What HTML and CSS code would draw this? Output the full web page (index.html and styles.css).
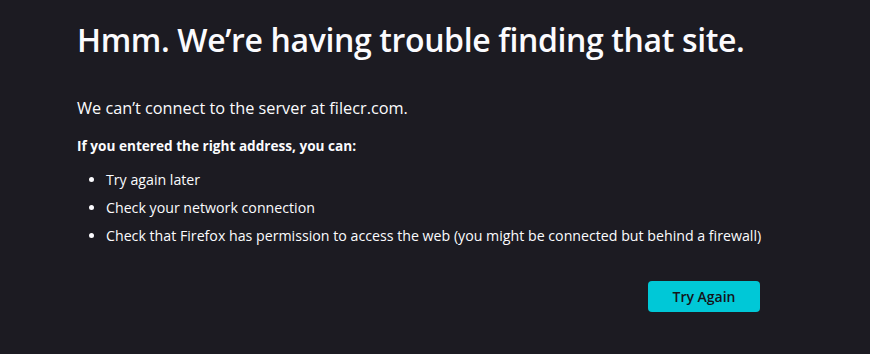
FILE: index.html
```html
<!DOCTYPE html>
<html>
<head>
<meta charset="utf-8">
<link rel="stylesheet" href="styles.css">
</head>
<body>
<main class="container">
  <h1 class="title">Hmm. We’re having trouble finding that site.</h1>
  <p class="intro">We can’t connect to the server at filecr.com.</p>
  <p class="subhead">If you entered the right address, you can:</p>
  <ul class="tips">
    <li>Try again later</li>
    <li>Check your network connection</li>
    <li>Check that Firefox has permission to access the web (you might be connected but behind a firewall)</li>
  </ul>
  <div class="actions">
    <button class="retry">Try Again</button>
  </div>
</main>
</body>
</html>
```

FILE: styles.css
```css
html, body {
  margin: 0;
  padding: 0;
  background: #1c1b22;
  color: #fbfbfe;
  font-family: "Open Sans", "Noto Sans", sans-serif;
}
.container {
  width: 683px;
  padding: 16px 0 0 77px;
}
.title {
  margin: 0;
  font-size: 32px;
  font-weight: 600;
  line-height: 48px;
  letter-spacing: -0.37px;
  white-space: nowrap;
}
.intro {
  margin: 32px 0 0;
  font-size: 16.3px;
  line-height: 24px;
}
.subhead {
  margin: 16px 0 0;
  font-size: 13.6px;
  font-weight: 700;
  line-height: 20px;
}
.tips {
  margin: 14px 0 0;
  padding-left: 29px;
  font-size: 14.2px;
  line-height: 20px;
}
.tips li {
  white-space: nowrap;
}
.tips li + li {
  margin-top: 8px;
}
.actions {
  display: flex;
  justify-content: flex-end;
  margin-top: 35px;
}
.retry {
  width: 112px;
  height: 31px;
  border: none;
  border-radius: 4px;
  background: #00c8d7;
  color: #15141a;
  font-family: inherit;
  font-size: 14px;
  font-weight: 600;
}
```
